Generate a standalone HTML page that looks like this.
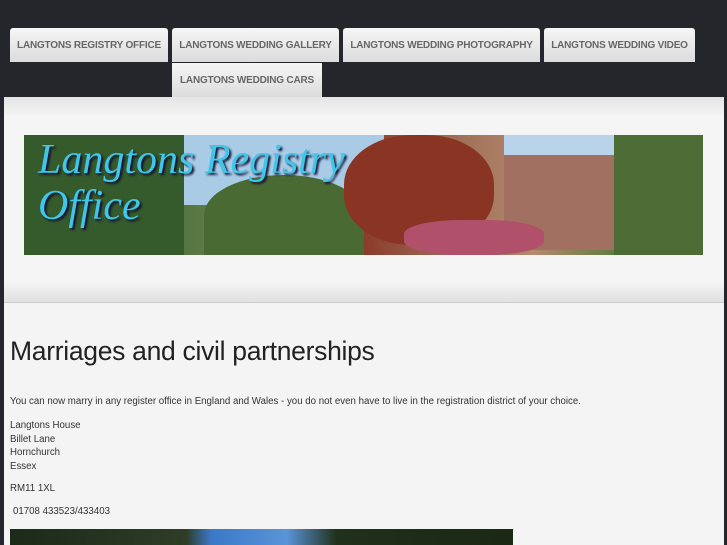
<!DOCTYPE html><html><head><style>
html,body{margin:0;width:727px;height:545px;overflow:hidden}
body{background:#25262b;font-family:"Liberation Sans",sans-serif;position:relative}
.tab{position:absolute;height:34px;background:linear-gradient(#f6f6f6,#dcdcdc);border-radius:3px 3px 0 0;color:#666;font-weight:bold;font-size:10px;line-height:36px;text-align:center;letter-spacing:-0.2px}
.panel{position:absolute;left:4px;top:97px;width:720px;height:448px;background:#f4f4f4}
.hdr{position:absolute;left:4px;top:97px;width:720px;height:205px;background:linear-gradient(#e4e4e4,#f5f5f5 20px,#f5f5f5 185px,#e2e2e2 203px);border-bottom:1px solid #ccc}
.ban{position:absolute;left:24px;top:135px;width:679px;height:120px;overflow:hidden;background:linear-gradient(90deg,#2f4a26 0%,#4f6e3a 20%,#6d8a54 35%,#8c3b2a 50%,#9a6b55 62%,#b58a6d 75%,#5a7a3e 88%,#8a6040 100%)}
p{margin:0;font-size:9.7px;color:#333}
</style></head><body>
<div class="tab" style="left:10px;top:28px;width:158px">LANGTONS REGISTRY OFFICE</div>
<div class="tab" style="left:172px;top:28px;width:167px">LANGTONS WEDDING GALLERY</div>
<div class="tab" style="left:343px;top:28px;width:197px">LANGTONS WEDDING PHOTOGRAPHY</div>
<div class="tab" style="left:544px;top:28px;width:151px">LANGTONS WEDDING VIDEO</div>
<div class="tab" style="left:172px;top:63px;width:150px;height:34px;border-radius:0">LANGTONS WEDDING CARS</div>
<div class="panel"></div>
<div class="hdr"></div>
<div class="ban">
<div style="position:absolute;left:160px;top:0;width:200px;height:70px;background:#a9cbe6"></div>
<div style="position:absolute;left:480px;top:0;width:130px;height:30px;background:#b8d3ea"></div>
<div style="position:absolute;left:0;top:0;width:160px;height:120px;background:#355a2c"></div>
<div style="position:absolute;left:180px;top:40px;width:160px;height:80px;background:#4a6a34;border-radius:50% 50% 0 0"></div>
<div style="position:absolute;left:320px;top:0;width:150px;height:110px;background:#8a3424;border-radius:45%"></div>
<div style="position:absolute;left:480px;top:20px;width:110px;height:95px;background:#a27060"></div>
<div style="position:absolute;left:590px;top:0;width:89px;height:120px;background:#4e6d36"></div>
<div style="position:absolute;left:380px;top:85px;width:140px;height:35px;background:#b0506a;border-radius:40%"></div>
<div style="position:absolute;left:14px;top:2px;font-family:'Liberation Serif',serif;font-style:italic;font-size:42px;line-height:46px;color:#3fc6e8;text-shadow:2px 2px 2px #113">Langtons Registry<br>Office</div>
</div>
<div style="position:absolute;left:10px;top:336px;font-size:26.5px;color:#222;letter-spacing:-0.3px">Marriages and civil partnerships</div>
<p style="position:absolute;left:10px;top:396px">You can now marry in any register office in England and Wales - you do not even have to live in the registration district of your choice.</p>
<p style="position:absolute;left:10px;top:419px;line-height:13.5px">Langtons House<br>Billet Lane<br>Hornchurch<br>Essex</p>
<p style="position:absolute;left:10px;top:483px">RM11 1XL</p>
<p style="position:absolute;left:13px;top:506px">01708 433523/433403</p>
<div style="position:absolute;left:10px;top:529px;width:503px;height:16px;background:linear-gradient(90deg,#1c2a18 0%,#2d3d26 35%,#3a78c8 40%,#5a94d8 55%,#20301a 65%,#1a2814 100%)"></div>
</body></html>
